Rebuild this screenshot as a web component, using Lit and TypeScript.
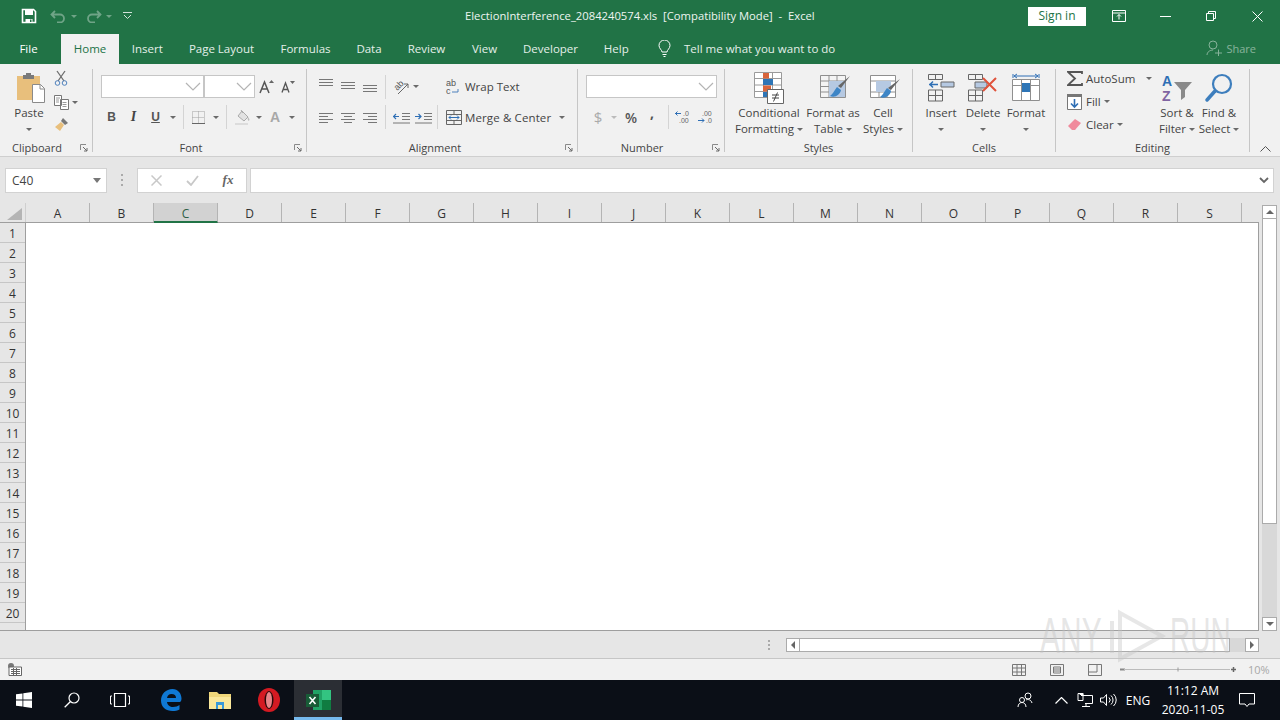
import { LitElement, css, html } from "lit";
import { customElement } from "lit/decorators.js";

const caret = (c = "#6a6a6a") => html`<svg class="caret" width="6" height="3" viewBox="0 0 6 3"><path d="M0 0h6L3 3z" fill=${c} /></svg>`;
const chevron = html`<svg width="16" height="9" viewBox="0 0 16 9"><path d="M1 1l7 7 7-7" fill="none" stroke="#b4b4b4" stroke-width="1.2" /></svg>`;
const launcher = html`<svg width="8" height="8" viewBox="0 0 8 8"><path d="M.5 6V.5H6" fill="none" stroke="#8a8a8a" /><path d="M3 3l4 4M7 4v3H4" fill="none" stroke="#6a6a6a" /></svg>`;

const TABS = [
  ["Insert", 56.5], ["Page Layout", 92], ["Formulas", 76], ["Data", 51],
  ["Review", 64], ["View", 52], ["Developer", 80], ["Help", 51.5],
] as const;

const COLS = "ABCDEFGHIJKLMNOPQRS".split("");
const ROWS = Array.from({ length: 20 }, (_, i) => i + 1);

@customElement("app-root")
export class AppRoot extends LitElement {
  static styles = css`
    :host {
      display: flex;
      flex-direction: column;
      width: 1280px;
      height: 720px;
      overflow: hidden;
      position: relative;
      font-family: "Open Sans", "Noto Sans", sans-serif;
      font-size: 11.5px;
      color: #444;
      background: #e6e6e6;
    }
    svg { display: block; flex: none; }

    .titlebar { display: flex; align-items: center; height: 32px; background: #217346; color: #fff; flex: none; }
    .qat { display: flex; align-items: center; width: 465px; padding-left: 21px; box-sizing: border-box; }
    .qat .save { margin-right: 13px; }
    .qat .dim { opacity: 0.35; }
    .title { font-size: 11.25px; color: #eef5f1; white-space: pre; padding-bottom: 2px; }
    .signin { margin-left: auto; width: 58px; height: 19px; background: #fff; color: #217346; font-size: 12px; line-height: 18px; text-align: center; }
    .winbtns { display: flex; margin-left: 10px; }
    .winbtn { width: 46px; height: 32px; display: flex; align-items: center; justify-content: center; }

    .tabs { display: flex; align-items: flex-end; height: 32px; background: #217346; flex: none; color: #e4efe9; font-size: 11.5px; }
    .tab { height: 30px; display: flex; align-items: center; justify-content: center; flex: none; padding-bottom: 2px; box-sizing: border-box; }
    .tab.file { width: 57px; color: #fff; }
    .tab.active { width: 58px; background: #f1f1f1; color: #217346; margin-left: 4px; }
    .tellme { display: flex; align-items: center; height: 30px; gap: 13px; margin-left: 16px; padding-bottom: 2px; box-sizing: border-box; }
    .share { margin-left: auto; margin-right: 24px; height: 30px; display: flex; align-items: center; gap: 3px; opacity: 0.45; padding-bottom: 2px; box-sizing: border-box; }

    .ribbon { display: flex; height: 92px; background: #f1f1f1; border-bottom: 1px solid #cfcfcf; flex: none; }
    .sep { width: 1px; height: 83px; margin-top: 5px; background: #c6c6c6; flex: none; }
    .group { display: flex; flex-direction: column; flex: none; position: relative; height: 92px; }
    .body { height: 75px; display: flex; flex: none; }
    .glabel { height: 17px; line-height: 17px; text-align: center; font-size: 11px; color: #444; }
    .launch { position: absolute; bottom: 4px; right: 4px; }
    .col { display: flex; flex-direction: column; }
    .row { display: flex; align-items: center; }
    .cell { display: flex; align-items: center; justify-content: center; flex: none; }
    .vsep { width: 1px; height: 24px; background: #d4d4d4; flex: none; }
    .big { display: flex; flex-direction: column; align-items: center; flex: none; padding-top: 7px; line-height: 16px; text-align: center; }
    .big .ic { height: 34px; display: flex; align-items: center; justify-content: center; }
    .big .t { white-space: nowrap; display: flex; align-items: center; justify-content: center; gap: 3px; height: 16px; }
    .combo { height: 23px; box-sizing: border-box; background: #fff; border: 1px solid #c6c6c6; display: flex; align-items: center; justify-content: flex-end; padding-right: 2px; flex: none; }
    .r1 { height: 23px; margin-top: 11px; }
    .r2 { height: 22px; margin-top: 8px; }
    .sans { font-family: "Liberation Sans", sans-serif; font-weight: 700; font-size: 12px; color: #555; }
    .tx { white-space: nowrap; }

    .fbar { display: flex; align-items: center; height: 46px; background: #e6e6e6; flex: none; padding-left: 5px; box-sizing: border-box; }
    .namebox { width: 102px; height: 25px; box-sizing: border-box; background: #fff; border: 1px solid #d2d2d2; display: flex; align-items: center; justify-content: space-between; padding: 0 5px 0 6px; color: #444; font-size: 12px; }
    .dots { width: 30px; display: flex; justify-content: center; }
    .fxbox { width: 110px; height: 25px; box-sizing: border-box; background: #fff; border: 1px solid #d2d2d2; display: flex; align-items: center; }
    .fxbox span { flex: none; display: flex; justify-content: center; width: 36px; }
    .fx { font-family: "Liberation Serif", serif; font-style: italic; font-weight: 700; font-size: 13px; color: #666; }
    .finput { width: 1024px; height: 25px; box-sizing: border-box; margin-left: 3px; background: #fff; border: 1px solid #d2d2d2; display: flex; align-items: center; justify-content: flex-end; padding-right: 4px; }

    .sheetwrap { display: flex; height: 428px; flex: none; }
    .sheet { width: 1259px; display: flex; flex-direction: column; flex: none; }
    .colhead { display: flex; height: 20px; box-sizing: border-box; border-bottom: 1px solid #9e9e9e; flex: none; }
    .corner { width: 26px; display: flex; align-items: flex-end; justify-content: flex-end; padding: 0 3px 2px 0; box-sizing: border-box; border-right: 1px solid #cfcfcf; }
    .ch { width: 64px; box-sizing: border-box; border-right: 1px solid #b4b4b4; text-align: center; line-height: 21px; font-size: 12px; color: #333; flex: none; }
    .ch.sel { background: #d2d2d2; border-bottom: 2px solid #217346; height: 20px; color: #2f5f47; }
    .grid { display: flex; height: 408px; border-bottom: 1px solid #9e9e9e; box-sizing: border-box; flex: none; }
    .rowhead { width: 26px; box-sizing: border-box; border-right: 1px solid #9e9e9e; overflow: hidden; flex: none; }
    .rh { height: 20px; box-sizing: border-box; border-bottom: 1px solid #c6c6c6; text-align: center; line-height: 21px; font-size: 12px; color: #333; }
    .cells { flex: 1; background: #fff; border-right: 1px solid #9e9e9e; }

    .vscroll { width: 21px; padding: 2px 3px 0 3px; box-sizing: border-box; display: flex; flex-direction: column; }
    .sbtn { width: 15px; height: 14px; box-sizing: border-box; background: #fff; border: 1px solid #ababab; display: flex; align-items: center; justify-content: center; flex: none; }
    .sbtn.h { width: 14px; }
    .vthumb { width: 15px; height: 305px; box-sizing: border-box; background: #fff; border: 1px solid #ababab; border-top: 0; flex: none; }
    .vtrack { flex: none; height: 93px; background: #d8d8d8; }

    .hbar { display: flex; align-items: center; height: 28px; flex: none; background: #e6e6e6; border-bottom: 1px solid #c6c6c6; box-sizing: border-box; }
    .hbar .split { margin-left: 768px; margin-right: 15px; }
    .hthumb { height: 14px; width: 430px; box-sizing: border-box; background: #fff; border: 1px solid #ababab; border-left: 0; flex: none; }
    .htrack { width: 15px; height: 14px; background: #d8d8d8; flex: none; }

    .status { display: flex; align-items: center; height: 21px; background: #f1f1f1; flex: none; padding-left: 8px; box-sizing: border-box; }
    .zoom { width: 116px; margin-left: 18px; display: flex; align-items: center; }
    .pct { margin-left: 12px; color: #a8a8a8; font-size: 11px; }

    .taskbar { display: flex; align-items: center; height: 40px; background: #0b0f17; flex: none; color: #fff; }
    .tb { width: 48px; height: 40px; display: flex; align-items: center; justify-content: center; flex: none; box-sizing: border-box; }
    .tb.act { background: #2b2e34; border-bottom: 3px solid #76b9ed; padding-top: 3px; }
    .tray { margin-left: auto; display: flex; align-items: center; }
    .clock { width: 78px; text-align: center; font-size: 12px; line-height: 19px; margin-left: -2px; }
    .eng { font-size: 12px; width: 36px; text-align: center; }

    .wm { position: absolute; left: 1040px; top: 608px; display: flex; align-items: center; height: 56px; color: rgba(195, 195, 195, 0.42); font-family: "Liberation Sans", sans-serif; font-size: 50px; line-height: 56px; pointer-events: none; }
    .wm span { display: block; transform-origin: left center; white-space: nowrap; }
    .wm .any { width: 70px; transform: scaleX(0.6); }
    .wm .run { width: 60px; margin-left: 4px; transform: scaleX(0.56); }
  `;

  private titlebar() {
    return html`<div class="titlebar">
      <div class="qat">
        <svg class="save" width="16" height="16" viewBox="0 0 16 16"><path d="M1.500 1.500h11l2 2v11h-13z" fill="none" stroke="#fff" stroke-width="1.600" /><path d="M4 2h8v5H4z" fill="#fff" /><path d="M4.500 11h7v3.500h-7z" fill="#fff" /><path d="M9 11.500h1.500v2.500H9z" fill="#217346" /></svg>
        <span class="row dim" style="width:35px">
          <svg width="17" height="13" viewBox="0 0 17 13"><path d="M5 1L1.500 4.500 5 8M2 4.500h8a4 4 0 010 8H7" fill="none" stroke="#fff" stroke-width="1.800" /></svg>
          <svg style="margin-left:4px" width="6" height="3" viewBox="0 0 6 3"><path d="M0 0h6L3 3z" fill="#fff" /></svg>
        </span>
        <span class="row dim" style="width:35px">
          <svg width="17" height="13" viewBox="0 0 17 13"><path d="M12 1l3.500 3.500L12 8M15 4.500H7a4 4 0 000 8h3" fill="none" stroke="#fff" stroke-width="1.800" /></svg>
          <svg style="margin-left:4px" width="6" height="3" viewBox="0 0 6 3"><path d="M0 0h6L3 3z" fill="#fff" /></svg>
        </span>
        <svg style="margin-left:3px;opacity:.8" width="9" height="8" viewBox="0 0 9 8"><path d="M0 .5h9" stroke="#fff" /><path d="M1 3l3.500 3.500L8 3" fill="none" stroke="#fff" /></svg>
      </div>
      <div class="title">ElectionInterference_2084240574.xls  [Compatibility Mode]  -  Excel</div>
      <div class="signin">Sign in</div>
      <div class="winbtns">
        <div class="winbtn"><svg width="14" height="12" viewBox="0 0 14 12"><path d="M.5 .5h13v11H.5zM.5 3h13" fill="none" stroke="#fff" /><path d="M7 9.500V4.500M5 6.500l2-2 2 2" fill="none" stroke="#fff" /></svg></div>
        <div class="winbtn"><svg width="11" height="1" viewBox="0 0 11 1"><path d="M0 .5h11" stroke="#fff" /></svg></div>
        <div class="winbtn"><svg width="10" height="10" viewBox="0 0 10 10"><path d="M.5 2.500h7v7h-7zM2.500 2.500v-2h7v7h-2" fill="none" stroke="#fff" /></svg></div>
        <div class="winbtn"><svg width="11" height="11" viewBox="0 0 11 11"><path d="M.5 .5l10 10M10.500 .5l-10 10" stroke="#fff" /></svg></div>
      </div>
    </div>`;
  }

  private tabs() {
    return html`<div class="tabs">
      <div class="tab file">File</div>
      <div class="tab active">Home</div>
      ${TABS.map(([name, w]) => html`<div class="tab" style="width:${w}px">${name}</div>`)}
      <div class="tellme">
        <svg width="13" height="17" viewBox="0 0 13 17"><path d="M4 12c0-2-3-3.500-3-6.500a5.500 5.500 0 0111 0c0 3-3 4.500-3 6.500zM4.500 14.500h4M5.500 16.500h2" fill="none" stroke="#fff" /></svg>
        <span>Tell me what you want to do</span>
      </div>
      <div class="share">
        <svg width="17" height="16" viewBox="0 0 17 16"><circle cx="7" cy="5" r="4" fill="none" stroke="#fff" /><path d="M1 15c0-3 3-5 6-5M9 13h7M12.500 9.500v6.500" fill="none" stroke="#fff" /></svg>
        <span style="color:#fff;font-size:11px">Share</span>
      </div>
    </div>`;
  }

  private clipboard() {
    return html`<div class="group" style="width:92px">
      <div class="body">
        <div class="big" style="width:42px;margin-left:8px">
          <div class="ic">
            <svg style="margin-left:4px" width="30" height="32" viewBox="0 0 30 32"><path d="M1 4h23v24H1z" fill="#e8bf7c" /><path d="M10 1h5v2h3v4H7V3h3z" fill="#7a7a7a" /><path d="M16.500 12.500h8l4 4v14h-12z" fill="#fff" stroke="#8a8a8a" /><path d="M24 12.500v4.500h4.500" fill="none" stroke="#8a8a8a" /></svg>
          </div>
          <div class="t">Paste</div>
          <div class="t">${caret()}</div>
        </div>
        <div class="col" style="padding-top:2px">
          <div class="cell" style="width:22px;height:24px"><svg width="14" height="16" viewBox="0 0 14 16"><path d="M3 1l7 10M11 1L4 11" stroke="#6d6d6d" stroke-width="1.300" fill="none" /><circle cx="3.500" cy="13" r="2.300" fill="none" stroke="#4f81bd" /><circle cx="10.500" cy="13" r="2.300" fill="none" stroke="#4f81bd" /></svg></div>
          <div class="row" style="height:24px">
            <div class="cell" style="width:22px"><svg width="15" height="15" viewBox="0 0 15 15"><path d="M.5 .5h7v10h-7zM6.500 4.500h8v10h-8z" fill="#fff" stroke="#777" /><path d="M2 3h4M2 5h3M2 7h3M8.500 7.500h4M8.500 9.500h4M8.500 11.500h4" stroke="#9a9a9a" /></svg></div>
            ${caret()}
          </div>
          <div class="cell" style="width:22px;height:20px"><svg width="15" height="15" viewBox="0 0 15 15"><path d="M9 1l5 5-3 2-4-4z" fill="#777" /><path d="M7 5l3 3-4 6-5-4z" fill="#e8bf7c" /></svg></div>
        </div>
      </div>
      <div class="glabel" style="padding-right:18px">Clipboard</div>
      <div class="launch">${launcher}</div>
    </div>`;
  }

  private font() {
    return html`<div class="group" style="width:213px">
      <div class="body col" style="padding-left:8px">
        <div class="row r1">
          <div class="combo" style="width:103px">${chevron}</div>
          <div class="combo" style="width:51px">${chevron}</div>
          <div class="cell" style="width:23px"><svg width="15" height="14" viewBox="0 0 15 14"><path d="M1 13L5.500 2 10 13M2.800 9h5.400" fill="none" stroke="#555" stroke-width="1.500" /><path d="M10 3l2.500-3L15 3z" fill="#666" /></svg></div>
          <div class="cell" style="width:20px"><svg width="14" height="13" viewBox="0 0 14 13"><path d="M1 12.500L4.500 3 8 12.500M2.300 9.500h4.400" fill="none" stroke="#555" stroke-width="1.300" /><path d="M9 1h5l-2.500 3z" fill="#666" /></svg></div>
        </div>
        <div class="row r2">
          <div class="cell sans" style="width:21px">B</div>
          <div class="cell" style="width:23px;font-family:'Liberation Serif',serif;font-style:italic;font-size:14px;font-weight:700">I</div>
          <div class="cell sans" style="width:21px;text-decoration:underline">U</div>
          <div class="cell" style="width:13px">${caret()}</div>
          <div class="vsep" style="margin:0 5px 0 4px"></div>
          <div class="cell" style="width:19px"><svg width="13" height="13" viewBox="0 0 13 13"><path d="M.5 .5h12v12H.5zM.5 6.500h12M6.500 .5v12" fill="none" stroke="#a0a0a0" stroke-dasharray="1 1" /><path d="M0 12.500h13" stroke="#666" /></svg></div>
          <div class="cell" style="width:15px">${caret()}</div>
          <div class="vsep" style="margin:0 6px 0 3px"></div>
          <div class="cell" style="width:20px"><svg width="16" height="16" viewBox="0 0 16 16"><path d="M3 7l4-5 6 6-4 4z" fill="#e2e2e2" stroke="#aaa" /><path d="M6 1l2 3" stroke="#aaa" /><path d="M13 8c1 1.500 2 2.500 1.200 3.500s-2-.5-1.200-3.500z" fill="#bbb" /><path d="M0 14h13v2H0z" fill="#dcdcdc" /></svg></div>
          <div class="cell" style="width:11px">${caret()}</div>
          <div class="cell sans" style="width:22px;font-size:14px;color:#a8a8a8">A</div>
          <div class="cell" style="width:12px">${caret()}</div>
        </div>
      </div>
      <div class="glabel" style="padding-right:17px">Font</div>
      <div class="launch">${launcher}</div>
    </div>`;
  }

  private alignLines(widths: number[], anchor: "l" | "c" | "r") {
    const x = (w: number) => (anchor === "l" ? 0 : anchor === "c" ? (14 - w) / 2 : 14 - w);
    const [a, b, c, d] = widths;
    return html`<svg width="14" height="11" viewBox="0 0 14 11"><path d="M${x(a)} 1.500h${a}M${x(b)} 4.500h${b}M${x(c)} 7.500h${c}M${x(d)} 10.500h${d}" stroke="#777" fill="none" /></svg>`;
  }

  private alignment() {
    const v = (mt: number) => html`<svg style="margin-top:${mt}px" width="14" height="8" viewBox="0 0 14 8"><path d="M0 .5h14M0 3.500h14M0 6.500h14" stroke="#777" fill="none" /></svg>`;
    return html`<div class="group" style="width:270px">
      <div class="body col" style="padding-left:8px">
        <div class="row r1">
          <div class="cell" style="width:22px">${v(-8)}</div>
          <div class="cell" style="width:22px">${v(-2)}</div>
          <div class="cell" style="width:22px">${v(5)}</div>
          <div class="vsep" style="margin:0 5px 0 4px"></div>
          <div class="cell" style="width:22px"><svg width="22" height="22" viewBox="0 0 22 22"><text x="3" y="13" font-size="9" fill="#555" font-family="Liberation Sans" transform="rotate(-45 7 10)">ab</text><path d="M7 18L17 8M13 8h4v4" fill="none" stroke="#666" /></svg></div>
          <div class="cell" style="width:6px">${caret()}</div>
          <div class="cell" style="width:22px;margin-left:23px"><svg width="16" height="20" viewBox="0 0 16 20"><text x="1" y="9" font-size="9" fill="#555" font-family="Liberation Sans">ab</text><text x="1" y="17" font-size="9" fill="#555" font-family="Liberation Sans">c</text><path d="M13 12v3H7" fill="none" stroke="#4f81bd" /></svg></div>
          <span class="tx" style="margin-left:1px">Wrap Text</span>
        </div>
        <div class="row r2">
          <div class="cell" style="width:22px">${this.alignLines([14, 9, 14, 9], "l")}</div>
          <div class="cell" style="width:22px">${this.alignLines([14, 8, 14, 8], "c")}</div>
          <div class="cell" style="width:22px">${this.alignLines([14, 9, 14, 9], "r")}</div>
          <div class="vsep" style="margin:0 4px 0 4px"></div>
          <div class="cell" style="width:22px"><svg width="17" height="13" viewBox="0 0 17 13"><path d="M9 2.500h8M9 5.500h8M9 8.500h8M0 12h17" stroke="#777" /><path d="M0 5.500h6M3 3L.5 5.500 3 8" fill="none" stroke="#2f6fb5" stroke-width="1.200" /></svg></div>
          <div class="cell" style="width:22px"><svg width="17" height="13" viewBox="0 0 17 13"><path d="M9 2.500h8M9 5.500h8M9 8.500h8M0 12h17" stroke="#777" /><path d="M0 5.500h6M3.500 3L6 5.500 3.500 8" fill="none" stroke="#2f6fb5" stroke-width="1.200" /></svg></div>
          <div class="vsep" style="margin:0 6px 0 3px"></div>
          <div class="cell" style="width:19px"><svg width="16" height="15" viewBox="0 0 16 15"><path d="M.5 .5h15v14H.5zM.5 4.500h15M.5 10.500h15M8 .5v4M8 10.500v4" fill="none" stroke="#666" /><path d="M3 7.500h10M5 5.500l-2 2 2 2M11 5.500l2 2-2 2" fill="none" stroke="#2f6fb5" /></svg></div>
          <span class="tx" style="width:90px;margin-left:2px;letter-spacing:.12px">Merge &amp; Center</span>
          <div class="cell" style="width:14px">${caret()}</div>
        </div>
      </div>
      <div class="glabel" style="padding-right:14px">Alignment</div>
      <div class="launch">${launcher}</div>
    </div>`;
  }

  private number() {
    return html`<div class="group" style="width:146px">
      <div class="body col" style="padding-left:8px">
        <div class="row r1"><div class="combo" style="width:131px">${chevron}</div></div>
        <div class="row r2">
          <div class="cell" style="width:24px;color:#aaa;font-size:15px">$</div>
          <div class="cell" style="width:7px;margin-right:2px">${caret("#bbb")}</div>
          <div class="cell" style="width:24px;color:#555;font-size:14px;font-weight:600">%</div>
          <div class="cell" style="width:18px;color:#555;font-size:14px;font-weight:700;padding-bottom:9px;box-sizing:border-box">,</div>
          <div class="vsep" style="margin:0 4px 0 7px"></div>
          <div class="cell" style="width:22px"><svg width="18" height="16" viewBox="0 0 18 16"><path d="M0 4.500h6M2.500 2.500l-2 2 2 2" fill="none" stroke="#2f6fb5" /><text x="8" y="7" font-size="7" fill="#666" font-family="Liberation Sans">.0</text><text x="4" y="14" font-size="7" fill="#666" font-family="Liberation Sans">.00</text></svg></div>
          <div class="cell" style="width:23px"><svg width="18" height="16" viewBox="0 0 18 16"><text x="4" y="7" font-size="7" fill="#666" font-family="Liberation Sans">.00</text><path d="M0 11.500h6M4 9.500l2 2-2 2" fill="none" stroke="#2f6fb5" /><text x="8" y="14" font-size="7" fill="#666" font-family="Liberation Sans">.0</text></svg></div>
        </div>
      </div>
      <div class="glabel" style="padding-right:18px">Number</div>
      <div class="launch">${launcher}</div>
    </div>`;
  }

  private styles_() {
    return html`<div class="group" style="width:187px">
      <div class="body" style="padding-left:8px">
        <div class="big" style="width:72px">
          <div class="ic"><svg width="30" height="32" viewBox="0 0 30 32"><path d="M.5 .5h27v25H.5zM.5 6.500h27M.5 13h27M.5 19.500h27M9.500 .5v25M18.500 .5v25" fill="#fff" stroke="#9a9a9a" /><path d="M9 1h6v5.500H9z" fill="#d9653c" /><path d="M9 7h10v6H9z" fill="#2e75b6" /><path d="M9 13.500h8v6H9z" fill="#d9653c" /><path d="M9 20h5v5H9z" fill="#2e75b6" /><path d="M13.500 17.500h16v14h-16z" fill="#fff" stroke="#666" /><path d="M18 23h7M18 26h7M23.500 20.500l-4 9" stroke="#444" /></svg></div>
          <div class="t">Conditional</div>
          <div class="t">Formatting ${caret()}</div>
        </div>
        <div class="big" style="width:56px">
          <div class="ic"><svg style="margin-left:3px" width="30" height="30" viewBox="0 0 30 30"><path d="M.5 2.500h25v22H.5zM.5 8h25M.5 13.500h25M.5 19h25M9 2.500v22M17 2.500v22" fill="#f4f4f4" stroke="#8f8f8f" /><path d="M9 8h16v16H9z" fill="#b6c9e2" /><path d="M30 3l-9 12-3-2z" fill="#666" /><path d="M17 14l4 3c-1 5-6 8-11 6 3-2 4-5 7-9z" fill="#3d85c6" /></svg></div>
          <div class="t">Format as</div>
          <div class="t">Table ${caret()}</div>
        </div>
        <div class="big" style="width:44px">
          <div class="ic"><svg style="margin-left:3px" width="30" height="30" viewBox="0 0 30 30"><path d="M.5 2.500h25v22H.5zM.5 8h25M.5 19h25M9 19v6M17 19v6" fill="#fff" stroke="#8f8f8f" /><path d="M6 8h15v11H6z" fill="#b6c9e2" /><path d="M30 6l-9 11-3-2z" fill="#666" /><path d="M17 15l4 3c-1 5-6 8-11 6 3-2 4-5 7-9z" fill="#3d85c6" /></svg></div>
          <div class="t">Cell</div>
          <div class="t">Styles ${caret()}</div>
        </div>
      </div>
      <div class="glabel">Styles</div>
    </div>`;
  }

  private cells() {
    return html`<div class="group" style="width:142px">
      <div class="body" style="padding-left:6px">
        <div class="big" style="width:44px">
          <div class="ic"><svg width="27" height="28" viewBox="0 0 27 28"><path d="M.5 .5h14v5H.5zM.5 16h14v11H.5zM.5 21.500h14M7.500 .5v5M7.500 16v11" fill="none" stroke="#666" /><path d="M13 8h13v5H13z" fill="#b6c9e2" stroke="#666" /><path d="M1 10.500h9M5 7.500l-3 3 3 3" fill="none" stroke="#2f6fb5" stroke-width="1.500" /></svg></div>
          <div class="t">Insert</div>
          <div class="t">${caret()}</div>
        </div>
        <div class="big" style="width:40px">
          <div class="ic"><svg width="30" height="28" viewBox="0 0 30 28"><path d="M.5 .5h14v5H.5zM.5 16h14v11H.5zM.5 21.500h14M7.500 .5v5M7.500 16v11" fill="none" stroke="#666" /><path d="M7 8h12v6H7z" fill="#b6c9e2" stroke="#666" /><path d="M15 4l13 13M28 4L15 17" stroke="#e0533c" stroke-width="2" /></svg></div>
          <div class="t">Delete</div>
          <div class="t">${caret()}</div>
        </div>
        <div class="big" style="width:46px">
          <div class="ic"><svg width="28" height="30" viewBox="0 0 28 30"><path d="M1 1v4M27 1v4M2 3h24M2 3l3-2M2 3l3 2M26 3l-3-2M26 3l-3 2" fill="none" stroke="#2f6fb5" /><path d="M.5 6.500h27v21H.5zM.5 12.500h27M9.500 6.500v21M18.500 6.500v21" fill="#fff" stroke="#8f8f8f" /><path d="M10 10h8v9h-8z" fill="#2e75b6" /></svg></div>
          <div class="t">Format</div>
          <div class="t">${caret()}</div>
        </div>
      </div>
      <div class="glabel">Cells</div>
    </div>`;
  }

  private editing() {
    return html`<div class="group" style="width:193px">
      <div class="body" style="padding-left:10px">
        <div class="col" style="width:90px;padding-top:3px">
          <div class="row" style="height:23px">
            <div class="cell" style="width:17px"><svg width="16" height="15" viewBox="0 0 16 15"><path d="M15 3V1H1l7 6.500L1 14h14v-2" fill="none" stroke="#555" stroke-width="1.800" /></svg></div>
            <span class="tx" style="margin-left:3px;width:60px">AutoSum</span>
            ${caret()}
          </div>
          <div class="row" style="height:23px">
            <div class="cell" style="width:17px"><svg width="15" height="16" viewBox="0 0 15 16"><path d="M.5 .5h14v15H.5z" fill="#fff" stroke="#777" /><path d="M0 0h15v3H0z" fill="#777" /><path d="M7.500 5v8M4 9.500l3.500 3.500L11 9.500" fill="none" stroke="#2f6fb5" stroke-width="1.600" /></svg></div>
            <span class="tx" style="margin-left:3px;margin-right:3px">Fill</span>
            ${caret()}
          </div>
          <div class="row" style="height:23px">
            <div class="cell" style="width:17px"><svg width="14" height="13" viewBox="0 0 14 13"><path d="M0 8l7-7 6 4-6 7H4z" fill="#f08a9c" /></svg></div>
            <span class="tx" style="margin-left:3px;margin-right:3px">Clear</span>
            ${caret()}
          </div>
        </div>
        <div class="big" style="width:42px">
          <div class="ic"><svg width="31" height="34" viewBox="0 0 31 34"><text x="0" y="15" font-size="14" font-weight="700" fill="#2f6fb5" font-family="Liberation Sans">A</text><text x="0" y="30" font-size="14" font-weight="700" fill="#8064a2" font-family="Liberation Sans">Z</text><path d="M12 11h18l-7 8v7l-4 3V19z" fill="#8a8a8a" /></svg></div>
          <div class="t">Sort &amp;</div>
          <div class="t">Filter ${caret()}</div>
        </div>
        <div class="big" style="width:42px">
          <div class="ic"><svg width="30" height="30" viewBox="0 0 30 30"><circle cx="18" cy="11" r="9" fill="none" stroke="#3d7ebd" stroke-width="2.200" /><path d="M11 18L3 27" stroke="#3d7ebd" stroke-width="3.500" stroke-linecap="round" /></svg></div>
          <div class="t">Find &amp;</div>
          <div class="t">Select ${caret()}</div>
        </div>
      </div>
      <div class="glabel">Editing</div>
    </div>`;
  }

  private ribbon() {
    const sep = html`<div class="sep"></div>`;
    return html`<div class="ribbon">
      ${this.clipboard()}${sep}${this.font()}${sep}${this.alignment()}${sep}${this.number()}${sep}${this.styles_()}${sep}${this.cells()}${sep}${this.editing()}${sep}
      <div class="cell" style="width:30px;height:92px;align-items:flex-end;padding-bottom:4px;box-sizing:border-box">
        <svg width="11" height="6" viewBox="0 0 11 6"><path d="M.5 5.500l5-5 5 5" fill="none" stroke="#555" /></svg>
      </div>
    </div>`;
  }

  private formulaBar() {
    return html`<div class="fbar">
      <div class="namebox"><span>C40</span><svg width="8" height="5" viewBox="0 0 8 5"><path d="M0 0h8L4 5z" fill="#777" /></svg></div>
      <div class="dots"><svg width="3" height="12" viewBox="0 0 3 12"><path d="M0 0h2v2H0zM0 5h2v2H0zM0 10h2v2H0z" fill="#aaa" /></svg></div>
      <div class="fxbox">
        <span><svg width="11" height="11" viewBox="0 0 11 11"><path d="M.5 .5l10 10M10.500 .5l-10 10" stroke="#c8c8c8" stroke-width="1.500" /></svg></span>
        <span><svg width="13" height="11" viewBox="0 0 13 11"><path d="M1 6l4 4 7-9" fill="none" stroke="#c8c8c8" stroke-width="1.800" /></svg></span>
        <span class="fx">fx</span>
      </div>
      <div class="finput"><svg width="10" height="7" viewBox="0 0 10 7"><path d="M1 1l4 4 4-4" fill="none" stroke="#666" stroke-width="1.800" /></svg></div>
    </div>`;
  }

  private sheet() {
    return html`<div class="sheetwrap">
      <div class="sheet">
        <div class="colhead">
          <div class="corner"><svg width="15" height="12" viewBox="0 0 15 12"><path d="M15 0v12H0z" fill="#b4b4b4" /></svg></div>
          ${COLS.map((c) => html`<div class="ch ${c === "C" ? "sel" : ""}">${c}</div>`)}
        </div>
        <div class="grid">
          <div class="rowhead">${ROWS.map((r) => html`<div class="rh">${r}</div>`)}</div>
          <div class="cells"></div>
        </div>
      </div>
      <div class="vscroll">
        <div class="sbtn"><svg width="8" height="4" viewBox="0 0 8 4"><path d="M0 4h8L4 0z" fill="#666" /></svg></div>
        <div class="vthumb"></div>
        <div class="vtrack"></div>
        <div class="sbtn"><svg width="8" height="4" viewBox="0 0 8 4"><path d="M0 0h8L4 4z" fill="#666" /></svg></div>
      </div>
    </div>`;
  }

  private hbar() {
    return html`<div class="hbar">
      <div class="split"><svg width="3" height="10" viewBox="0 0 3 10"><path d="M0 0h2v2H0zM0 4h2v2H0zM0 8h2v2H0z" fill="#aaa" /></svg></div>
      <div class="sbtn h"><svg width="4" height="8" viewBox="0 0 4 8"><path d="M4 0v8L0 4z" fill="#666" /></svg></div>
      <div class="hthumb"></div>
      <div class="htrack"></div>
      <div class="sbtn h"><svg width="4" height="8" viewBox="0 0 4 8"><path d="M0 0v8l4-4z" fill="#666" /></svg></div>
    </div>`;
  }

  private status() {
    return html`<div class="status">
      <svg width="14" height="13" viewBox="0 0 14 13"><circle cx="3" cy="3" r="3" fill="#777" /><path d="M1 4h12.500v8.500H1z" fill="#fff" stroke="#666" /><path d="M3 6.500h9M3 8.500h9M3 10.500h9M5.500 5v7M8.500 5v7" stroke="#666" /></svg>
      <div class="cell" style="width:14px;margin-left:990px"><svg width="14" height="12" viewBox="0 0 14 12"><path d="M.5 .5h13v11H.5zM.5 4h13M.5 8h13M5 .5v11M9.500 .5v11" fill="none" stroke="#777" /></svg></div>
      <div class="cell" style="width:14px;margin-left:24px"><svg width="14" height="12" viewBox="0 0 14 12"><path d="M.5 .5h13v11H.5zM3.500 3h7v6h-7zM4 5h6M4 7h6" fill="none" stroke="#777" /></svg></div>
      <div class="cell" style="width:14px;margin-left:24px"><svg width="14" height="12" viewBox="0 0 14 12"><path d="M.5 .5h13v11H.5zM.5 8h8.500M9 .5V8" fill="none" stroke="#777" /></svg></div>
      <div class="zoom">
        <svg width="116" height="9" viewBox="0 0 116 9"><path d="M0 4.500h5" stroke="#888" stroke-width="2" /><path d="M4 4.500h106" stroke="#bcbcbc" /><path d="M58 2.500v4" stroke="#999" /><path d="M111 4.500h5M113.500 2v5" stroke="#666" stroke-width="1.500" /></svg>
      </div>
      <span class="pct">10%</span>
    </div>`;
  }

  private taskbar() {
    return html`<div class="taskbar">
      <div class="tb"><svg width="16" height="16" viewBox="0 0 16 16"><path d="M0 2.300l6.500-.9v6.200H0zM7.300 1.300L16 0v7.600H7.300zM0 8.400h6.500v6.200L0 13.700zM7.300 8.400H16V16l-8.700-1.300z" fill="#fff" /></svg></div>
      <div class="tb"><svg width="16" height="16" viewBox="0 0 16 16"><circle cx="10" cy="6" r="5" fill="none" stroke="#fff" stroke-width="1.200" /><path d="M6.500 9.500L.7 15.300" stroke="#fff" stroke-width="1.300" /></svg></div>
      <div class="tb"><svg width="20" height="14" viewBox="0 0 20 14"><path d="M4.500 .5h11v13h-11z" fill="none" stroke="#fff" stroke-width="1.200" /><path d="M2 3H.5v8H2M18 3h1.500v8H18" fill="none" stroke="#fff" /></svg></div>
      <div class="tb" style="width:53px"><svg width="22" height="22" viewBox="0 0 22 22"><path d="M20 13H7c.5 3.500 3 5 6 5 2.500 0 5-.8 6.500-2v4.500C17.500 21.500 15 22 12.500 22 6 22 1 18 1 11.500 1 5 6 0 12.500 0 18 0 21.500 4.500 21.500 9.500c0 1.200-.5 3.500-1.500 3.500zM7 9h9c0-2.500-1.500-4-4.500-4C9 5 7.500 6.500 7 9z" fill="#0f78d4" /></svg></div>
      <div class="tb" style="width:46px"><svg width="22" height="19" viewBox="0 0 22 19"><path d="M0 1h8l2 2h12v15H0z" fill="#f0d77a" /><path d="M0 6h22v12H0z" fill="#fbe89b" /><path d="M7 11h8v7H7z" fill="#3a9ad9" /><path d="M9 14h4v4H9z" fill="#fbe89b" /></svg></div>
      <div class="tb" style="width:51px"><svg width="22" height="24" viewBox="0 0 22 24"><ellipse cx="11" cy="12" rx="11" ry="12" fill="#d41a22" /><ellipse cx="11" cy="12" rx="4.500" ry="9" fill="#2a0a0a" /><ellipse cx="11" cy="12" rx="3" ry="8" fill="#e8868a" /></svg></div>
      <div class="tb act"><svg width="25" height="21" viewBox="0 0 25 21"><path d="M7 0h18v20H7z" fill="#21a366" /><path d="M16 0h9v10h-9z" fill="#33c481" /><path d="M16 10h9v10h-9z" fill="#107c41" /><path d="M0 4h13v13H0z" fill="#185c37" /><path d="M3.500 7l6 7M9.500 7l-6 7" stroke="#fff" stroke-width="1.600" /></svg></div>
      <div class="tray">
        <div class="cell" style="width:34px"><svg width="16" height="16" viewBox="0 0 16 16"><circle cx="11" cy="4" r="3" fill="none" stroke="#fff" /><circle cx="5" cy="8" r="2.500" fill="none" stroke="#fff" /><path d="M1 15c0-3 2-4.500 4-4.500S9 12 9 15M9 8c2-1 5-.5 6 3" fill="none" stroke="#fff" /></svg></div>
        <div class="cell" style="width:24px;margin-left:7px"><svg width="13" height="7" viewBox="0 0 13 7"><path d="M.5 6.500l6-6 6 6" fill="none" stroke="#fff" stroke-width="1.200" /></svg></div>
        <div class="cell" style="width:24px"><svg width="16" height="14" viewBox="0 0 16 14"><path d="M4 2.500h11.500v8H8M3 .5h3v1H3zM1 .5h5v7H1zM5 13.500h8M9 10.500v3" fill="none" stroke="#fff" /></svg></div>
        <div class="cell" style="width:23px"><svg width="17" height="14" viewBox="0 0 17 14"><path d="M.5 5h3l3-3.500v11L3.500 9h-3zM9 4.500a3.500 3.500 0 010 5M11 2.500a6 6 0 010 9M13.500 1a8 8 0 010 12" fill="none" stroke="#fff" /></svg></div>
        <span class="eng">ENG</span>
        <div class="clock">
          <div>11:12 AM</div>
          <div>2020-11-05</div>
        </div>
        <div class="cell" style="width:28px;margin:0 19px 0 1px"><svg width="16" height="14" viewBox="0 0 16 14"><path d="M.5 .5h15v10.500H10L8 13.500 6 11H.5z" fill="none" stroke="#fff" /></svg></div>
      </div>
    </div>`;
  }

  render() {
    return html`
      ${this.titlebar()}
      ${this.tabs()}
      ${this.ribbon()}
      ${this.formulaBar()}
      ${this.sheet()}
      ${this.hbar()}
      ${this.status()}
      ${this.taskbar()}
      <div class="wm">
        <span class="any">ANY</span>
        <svg width="56" height="54" viewBox="0 0 56 54"><path d="M10 4l42 23-42 23zM2 12v32" fill="none" stroke="rgba(195,195,195,0.4)" stroke-width="4" /></svg>
        <span class="run">RUN</span>
      </div>
    `;
  }
}
